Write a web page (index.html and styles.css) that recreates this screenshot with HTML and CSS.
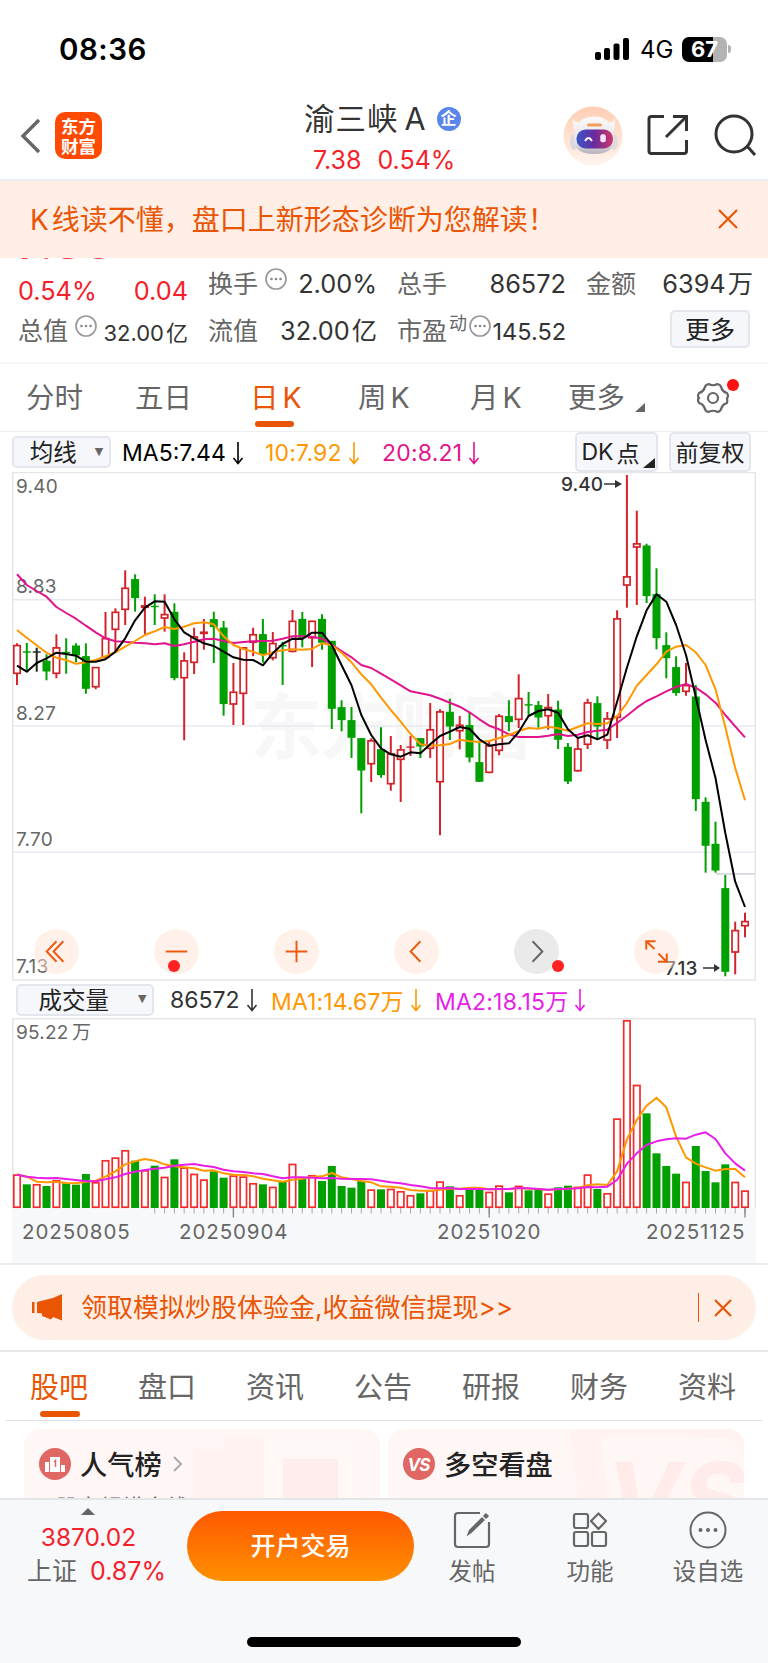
FILE: index.html
```html
<!DOCTYPE html>
<html lang="zh-CN">
<head>
    <meta charset="utf-8">
    <title>渝三峡A</title>
    <link rel="stylesheet" href="styles.css">
</head>
<body>
    <div class="status">
        <span class="time">08:36</span>
        <svg class="signal" width="34" height="23" viewBox="0 0 34 23">
            <rect x="0" y="14" width="6" height="8" rx="2"/><rect x="9" y="10" width="6" height="12" rx="2"/>
            <rect x="18.500" y="5.500" width="6" height="16.500" rx="2"/><rect x="28" y="0" width="6" height="22" rx="2"/>
        </svg>
        <span class="net">4G</span>
        <div class="battery"><b>67</b></div>
        <i class="nub"></i>
    </div>

    <div class="header">
        <svg class="back" width="22" height="36" viewBox="0 0 22 36"><path d="M20 2 L4 18 L20 34" fill="none" stroke="#666" stroke-width="3.400"/></svg>
        <div class="logo">东方<br>财富</div>
        <div class="title">
            <div class="name">渝三峡<span>A</span><em>企</em></div>
            <div class="price"><span>7.38</span><span>0.54%</span></div>
        </div>
        <svg class="robot" width="60" height="60" viewBox="0 0 60 60">
            <defs>
                <linearGradient id="rbg" x1="0" y1="0" x2="0" y2="1"><stop offset="0" stop-color="#ffcdb2"/><stop offset="1" stop-color="#fff5ef"/></linearGradient>
                <linearGradient id="face" x1="0" y1="0" x2="1" y2="0"><stop offset="0" stop-color="#3a55c8"/><stop offset=".5" stop-color="#6a2a9c"/><stop offset="1" stop-color="#d0386a"/></linearGradient>
                <linearGradient id="head" x1="0" y1="0" x2="0" y2="1"><stop offset="0" stop-color="#fbfafa"/><stop offset=".7" stop-color="#e4e1e6"/><stop offset="1" stop-color="#b5b0ba"/></linearGradient>
            </defs>
            <circle cx="30" cy="30" r="29.500" fill="url(#rbg)"/>
            <path d="M10 12 Q9 24 14 27 L22 16 Q12 18 10 12 M52 12 Q53 24 48 27 L40 16 Q50 18 52 12" fill="#f7f4f4"/>
            <ellipse cx="11" cy="36" rx="4" ry="8" fill="#dcd8de"/><ellipse cx="51" cy="36" rx="4" ry="8" fill="#e2dade"/>
            <path d="M11 30 Q13 10.500 31 10.500 Q49 10.500 51 30 Q53 48 31 48 Q9 48 11 30" fill="url(#head)"/>
            <rect x="24" y="17.500" width="15" height="3" rx="1.500" fill="#f0a05a"/>
            <rect x="13.500" y="23.500" width="36.500" height="19" rx="9" fill="url(#face)"/>
            <path d="M22 35 q3.500 -6 7 0" fill="none" stroke="#fff" stroke-width="1.800"/><rect x="37.300" y="28.300" width="5.500" height="8" rx="2" fill="#f8e4f8"/>
        </svg>
        <svg class="share" width="42" height="42" viewBox="0 0 42 42" fill="none" stroke="#333" stroke-width="3">
            <path d="M17 2.500 H4.500 Q2 2.500 2 5 V37 Q2 39.500 4.500 39.500 H37 Q39.500 39.500 39.500 37 V26 M26 2.500 H39.500 V17 M39 3 L19 23"/>
        </svg>
        <svg class="search" width="44" height="44" viewBox="0 0 44 44" fill="none" stroke="#333" stroke-width="3"><circle cx="20" cy="20" r="18"/><path d="M33 32 L41 41"/></svg>
    </div>

    <div class="tip">
        <span>K<i></i>线读不懂，盘口上新形态诊断为您解读！</span>
        <svg width="22" height="22" viewBox="0 0 22 22"><path d="M2 2 L20 20 M20 2 L2 20" stroke="#ea5504" stroke-width="2.200"/></svg>
    </div>

    <div class="quote">
        <div class="last"><span>7.38</span></div>
        <div class="cell red drop"><span>0.54%</span><span>0.04</span></div>
        <div class="cell"><label>换手</label><svg class="more-dot"><use href="#dots"/></svg><span class="r">2.00%</span></div>
        <div class="cell"><label>总手</label><span class="r">86572</span></div>
        <div class="cell"><label>金额</label><span class="r">6394<u>万</u></span></div>
        <div class="cell"><label>总值</label><svg class="more-dot"><use href="#dots"/></svg><span class="r sm">32.00<u>亿</u></span></div>
        <div class="cell"><label>流值</label><span class="r">32.00<u>亿</u></span></div>
        <div class="cell"><label>市盈</label><sup>动</sup><svg class="more-dot pe"><use href="#dots"/></svg><span class="r md">145.52</span></div>
        <div class="cell"><button class="btn more">更多</button></div>
    </div>
    <svg class="defs"><symbol id="dots" viewBox="0 0 22 22"><circle cx="11" cy="11" r="10" fill="none" stroke="#999" stroke-width="1.700"/><g fill="#888"><circle cx="6.500" cy="11" r="1.300"/><circle cx="11" cy="11" r="1.300"/><circle cx="15.500" cy="11" r="1.300"/></g></symbol></svg>

    <div class="period">
        <span class="p1">分时</span>
        <span class="p2">五日</span>
        <span class="p3 on">日<i></i>K</span>
        <span class="p4">周<i></i>K</span>
        <span class="p5">月<i></i>K</span>
        <span class="p6">更多<svg width="10" height="10"><path d="M10 0 V9 H0 Z" fill="#666"/></svg></span>
        <span class="p7">
            <svg width="34" height="34" viewBox="0 0 34 34" fill="none" stroke="#666" stroke-width="2.200">
                <path d="M12.500 3 Q17 5.500 21.500 3 Q25 3.800 25.600 7.500 Q27 11 31 12 Q33 15.500 31 17 Q31.500 20 31 22 Q27 23 25.600 26.500 Q25 30.200 21.500 31 Q17 28.500 12.500 31 Q9 30.200 8.400 26.500 Q7 23 3 22 Q1 18.500 3 17 Q1 15.500 3 12 Q7 11 8.400 7.500 Q9 3.800 12.500 3 Z" stroke-linejoin="round"/><circle cx="17" cy="17" r="5"/>
            </svg>
            <b></b>
        </span>
    </div>

    <div class="bar ma">
        <button class="btn drop-btn">均线<i>▼</i></button>
        <span class="m1">MA5:7.44<svg class="dn"><use href="#dn"/></svg></span>
        <span class="m2">10:7.92<svg class="dn"><use href="#dn"/></svg></span>
        <span class="m3">20:8.21<svg class="dn"><use href="#dn"/></svg></span>
        <button class="btn dk">DK<i></i>点<svg width="12" height="10"><path d="M12 0 V10 H0 Z" fill="#222"/></svg></button>
        <button class="btn fq">前复权</button>
    </div>
    <svg class="defs"><symbol id="dn" viewBox="0 0 12 24"><path d="M6 1 V22 M1.500 17 L6 22.500 L10.500 17" fill="none" stroke="currentColor" stroke-width="1.600"/></symbol></svg>

    <div class="kline">
        <svg id="kline" width="744" height="509" viewBox="12 472 744 509"></svg>
        <div class="tools">
            <i><svg viewBox="0 0 46 46"><path d="M23 12.500 L13 23 L23 33.500 M30 12.500 L20 23 L30 33.500"/></svg></i>
            <i><svg viewBox="0 0 46 46"><path d="M12 23 H34"/></svg><b class="d1"></b></i>
            <i><svg viewBox="0 0 46 46"><path d="M12 23 H34 M23 12 V34"/></svg></i>
            <i><svg viewBox="0 0 46 46"><path d="M27 12.500 L17 23 L27 33.500"/></svg></i>
            <i class="grey"><svg viewBox="0 0 46 46"><path d="M19 12.500 L29 23 L19 33.500"/></svg><b class="d2"></b></i>
            <i><svg viewBox="0 0 46 46"><path d="M12.500 21 V12.500 H22 M12.500 12.500 L21 20.500 M25 25 L33.500 33.500 M24.500 33.500 H33.500 V25"/></svg></i>
        </div>
    </div>

    <div class="bar vol">
        <button class="btn drop-btn">成交量<i>▼</i></button>
        <span class="v1">86572<svg class="dn"><use href="#dn"/></svg></span>
        <span class="v2">MA1:14.67万<svg class="dn"><use href="#dn"/></svg></span>
        <span class="v3">MA2:18.15万<svg class="dn"><use href="#dn"/></svg></span>
    </div>
    <svg id="volume" class="volume" width="744" height="245" viewBox="12 1018 744 245"></svg>

    <div class="promo">
        <div class="pill">
            <svg width="32" height="27" viewBox="0 0 32 27" fill="#ea5504"><path d="M1 8 H3.500 V19 H1 Z M6 8 L22 4 L31 0 V26.500 L22 23 L20 25.500 L11 22 V19.500 L6 19 Z"/></svg>
            <span>领取模拟炒股体验金,收益微信提现&gt;&gt;</span>
            <i></i>
            <svg class="x" width="20" height="20" viewBox="0 0 20 20"><path d="M2 2 L18 18 M18 2 L2 18" stroke="#ea5504" stroke-width="2.200"/></svg>
        </div>
    </div>

    <div class="tabs">
        <span class="on">股吧</span><span>盘口</span><span>资讯</span><span>公告</span><span>研报</span><span>财务</span><span>资料</span>
    </div>

    <div class="cards">
        <div class="card">
            <svg class="deco" width="356" height="70" viewBox="0 0 356 70"><path d="M170 20 H200 V8 H240 V70 H170 Z" fill="#fff2f1"/><path d="M240 12 H333 V70 H240 Z" fill="#fff8f7"/><path d="M259 30 H314 V70 H259 Z" fill="#ffecec"/></svg>
            <div class="head">
                <svg width="32" height="32" viewBox="0 0 32 32"><circle cx="16" cy="16" r="16" fill="#e06763"/><path d="M6 14 H10 V24 H6 Z M11 9 H21 V24 H11 Z M22 17 H26 V24 H22 Z" fill="#fff"/><path d="M15 14 L16.500 12.500 V19" stroke="#e06763" stroke-width="1.500" fill="none"/></svg>
                <h3>人气榜</h3>
                <svg width="10" height="16" viewBox="0 0 10 16"><path d="M1 1 L8 8 L1 15" fill="none" stroke="#aaa" stroke-width="2"/></svg>
            </div>
            <p>股市规模全线 <span>1</span></p>
        </div>
        <div class="card">
            <svg class="deco" width="356" height="70" viewBox="0 0 356 70"><path d="M182 0 H356 V70 H190 Z" fill="#fff2f0"/><path d="M212 8 L270 6 L345 10 L356 30 V70 H220 Z" fill="#fff7f5"/><text x="218" y="106" class="vs-big">VS</text></svg>
            <div class="head">
                <svg width="32" height="32" viewBox="0 0 32 32"><circle cx="16" cy="16" r="16" fill="#e06763"/><text x="15.500" y="22.500" class="vs">VS</text></svg>
                <h3>多空看盘</h3>
            </div>
        </div>
    </div>

    <div class="footer">
        <div class="index">
            <i></i>
            <div class="red">3870.02</div>
            <div class="pct"><label>上证</label><span class="red">0.87%</span></div>
        </div>
        <button class="open">开户交易</button>
        <div class="act a1">
            <svg width="38" height="38" viewBox="0 0 38 38" fill="none" stroke="#666" stroke-width="2.200"><path d="M27 2 H5 Q2 2 2 5 V33 Q2 36 5 36 H33 Q36 36 36 33 V11"/><path d="M13.500 25.500 L16 19 L29 6 L32 9 L18.500 22 Z" fill="#666" stroke="none"/><path d="M31.500 6.500 L34.500 3.500" stroke-width="4.500"/></svg>
            发帖
        </div>
        <div class="act a2">
            <svg width="36" height="38" viewBox="0 0 36 38" fill="none" stroke="#666" stroke-width="2.200"><rect x="2" y="3" width="14" height="14" rx="2"/><rect x="2" y="21" width="14" height="14" rx="2"/><rect x="20" y="21" width="14" height="14" rx="2"/><path d="M26.500 2.500 L34 10 L26.500 18 L19 10 Z" stroke-linejoin="round"/></svg>
            功能
        </div>
        <div class="act a3">
            <svg width="38" height="38" viewBox="0 0 38 38"><circle cx="19" cy="19" r="17.500" fill="none" stroke="#666" stroke-width="2"/><g fill="#666"><circle cx="11.500" cy="19" r="2"/><circle cx="19" cy="19" r="2"/><circle cx="26.500" cy="19" r="2"/></g></svg>
            设自选
        </div>
        <div class="home"></div>
    </div>
    <script src="chart.js"></script>
</body>
</html>
```
FILE: styles.css
```css
* { box-sizing: border-box; }

body {
    margin: 0;
    width: 768px;
    height: 1663px;
    overflow: hidden;
    background: #fff;
    color: #333;
    font-family: Inter, "Noto Sans CJK SC", sans-serif;
    display: flex;
    flex-direction: column;
}

body > * { flex: none; }

i, em, u { font-style: normal; text-decoration: none; }

button { font-family: inherit; padding: 0; }

.red { color: #f4212b; }

.defs { display: none; }

/* status bar */
.status {
    height: 100px;
    padding: 0 37px 2px 59px;
    display: flex;
    align-items: center;
    color: #000;
}

.time {
    font-size: 29.500px;
    font-weight: 600;
    margin-right: auto;
    letter-spacing: 0.500px;
}

.net {
    font-size: 24px;
    margin: 0 10px 0 11px;
    width: 32px;
}

.battery {
    width: 45px;
    height: 25px;
    border-radius: 7px;
    background: linear-gradient(90deg, #000 68%, #b3b3b3 68%);
    color: #fff;
    text-align: center;
    line-height: 25px;
    font-size: 22px;
}

.nub {
    width: 3px;
    height: 8px;
    margin-left: 1px;
    border-radius: 0 4px 4px 0;
    background: #b3b3b3;
}

/* header */
.header {
    height: 81px;
    border-bottom: 2px solid #eceef0;
    display: flex;
    align-items: flex-start;
}

.back { margin: 18px 0 0 19px; }

.logo {
    width: 47px;
    height: 47px;
    margin: 12px 0 0 14px;
    padding-top: 5px;
    border-radius: 10px;
    background: #ff4a04;
    color: #fff;
    font-weight: bold;
    font-size: 17.500px;
    line-height: 19.500px;
    text-align: center;
}

.title {
    margin-left: 202px;
    width: 172px;
    white-space: nowrap;
}

.name {
    font-size: 30.500px;
    line-height: 38px;
    letter-spacing: 1px;
    display: flex;
    align-items: center;
}

.name span { margin-left: 6px; }

.name em {
    margin-left: 10px;
    width: 24px;
    height: 24px;
    border-radius: 50%;
    background: #5a86ea;
    color: #fff;
    font-size: 16px;
    font-weight: bold;
    line-height: 23px;
    letter-spacing: 0;
    text-align: center;
}

.price {
    font-size: 25px;
    line-height: 24px;
    margin: 10px 0 0 9px;
    color: #f4212b;
    display: flex;
    gap: 16px;
}

.robot { margin: 6px 0 0 87px; }
.share { margin: 14px 0 0 24px; }
.search { margin: 14px 0 0 25px; }

/* tip */
.tip {
    height: 77px;
    padding: 0 29px 4px 30px;
    background: #feeee6;
    color: #ea5504;
    display: flex;
    align-items: center;
    justify-content: space-between;
    font-size: 28px;
}

.tip i { margin-left: 3px; }
.tip svg { margin-top: 2px; }

/* quote */
.quote {
    height: 106px;
    padding: 1px 15px 0 18px;
    border-bottom: 2px solid #f4f5f6;
    position: relative;
    display: grid;
    grid-template-columns: 170px 169px 169px 167px;
    grid-template-rows: 49px 45px;
    column-gap: 20px;
    font-size: 25.300px;
}

.last {
    position: absolute;
    left: 17px;
    top: 0;
    height: 2px;
    overflow: hidden;
}

.last span {
    display: block;
    margin-top: -45px;
    color: #ff3a42;
    font-size: 49px;
    font-weight: 500;
    line-height: 58px;
}

.cell {
    display: flex;
    align-items: center;
    white-space: nowrap;
    line-height: 46px;
}

.cell.drop { justify-content: space-between; padding-top: 15px; }

.cell label { color: #666; font-size: 25px; }

.cell .r { margin-left: auto; }
.cell .sm { font-size: 22px; padding-top: 4px; }
.cell .md { font-size: 23.500px; padding-top: 3px; }

.cell u { margin-left: 2px; }

.cell sup {
    font-size: 18px;
    line-height: 18px;
    color: #666;
    margin: -14px 0 0 2px;
}

.more-dot {
    width: 22px;
    height: 22px;
    margin: -10px 0 0 7px;
}

.more-dot.pe { margin-left: 2px; }

.btn {
    border: 2px solid #e3e6ec;
    border-radius: 5px;
    background: #f6f7fa;
    color: #222;
    display: flex;
    align-items: center;
    justify-content: center;
    white-space: nowrap;
}

.more {
    width: 80px;
    height: 38px;
    margin: -4px 3px 0 auto;
    padding-bottom: 2px;
    font-size: 25px;
}

/* period tabs */
.period {
    height: 68px;
    border-bottom: 1px solid #eceef0;
    display: flex;
    align-items: center;
    position: relative;
    font-size: 28.500px;
    color: #666;
}

.period span { position: relative; white-space: nowrap; line-height: 42px; }
.period i { margin-left: 4px; }
.p1 { margin-left: 26px; width: 109px; }
.p2 { width: 115px; }
.p3 { width: 108px; }
.p4 { width: 112px; }
.p5 { width: 98px; }
.p6 { width: 128px; }
.p6 svg { margin: 0 0 -5px 10px; }
.p7 svg { display: block; }

.p7 b {
    position: absolute;
    right: -9px;
    top: -2px;
    width: 12px;
    height: 12px;
    border-radius: 50%;
    background: #f11;
}

.period .on, .tabs .on { color: #ea5504; }

.period .on::after,
.tabs .on::after {
    content: "";
    position: absolute;
    left: 5px;
    bottom: -8px;
    width: 39px;
    height: 6px;
    border-radius: 3px;
    background: #ea5504;
}

/* indicator bars */
.bar {
    height: 40px;
    display: flex;
    align-items: center;
    padding-left: 12px;
    font-size: 23px;
    white-space: nowrap;
}

.bar span { display: flex; align-items: center; padding-top: 1px; }

.dn { width: 12px; height: 24px; margin-left: 6px; }

.drop-btn { height: 32px; padding-bottom: 2px; font-size: 23.500px; }
.drop-btn i { font: 11px "DejaVu Sans"; color: #666; }

.ma .drop-btn { width: 99px; padding-left: 10px; }
.ma .drop-btn i { margin-left: 18px; }
.m1 { margin-left: 11px; width: 143px; color: #000; }
.m2 { width: 117px; color: #ff9800; letter-spacing: 0.200px; }
.m3 { width: 193px; color: #e1148c; letter-spacing: 0.200px; }

.dk, .fq { height: 40px; font-size: 23px; }
.dk { width: 83px; padding-left: 3px; }
.dk i { margin-left: 3px; }
.dk svg { align-self: flex-end; margin: 0 0 2px 3px; }
.fq { width: 82px; margin-left: 11px; padding-bottom: 2px; }

.vol { height: 37px; padding-left: 16px; }
.vol .drop-btn { width: 138px; padding-left: 15px; }
.vol .drop-btn i { margin-left: 29px; }
.v1 { width: 101px; margin-left: 16px; }
.v2 { width: 164px; color: #ff9800; letter-spacing: 0.100px; }
.v3 { color: #e81ee8; letter-spacing: 0.200px; }

/* charts */
.kline {
    height: 509px;
    padding-left: 12px;
    position: relative;
}

.kline > svg, .volume { display: block; }

.volume { margin-left: 12px; }

.tools {
    position: absolute;
    left: 34px;
    top: 457px;
    display: flex;
    gap: 75px;
}

.tools > i {
    position: relative;
    width: 45px;
    height: 45px;
    border-radius: 50%;
    background: rgba(255, 227, 212, 0.500);
}

.tools > .grey { background: rgba(220, 220, 220, 0.600); }

.tools svg { display: block; fill: none; stroke: #ee5a10; stroke-width: 2; }
.tools .grey svg { stroke: #666; }

.tools b {
    position: absolute;
    width: 12px;
    height: 12px;
    border-radius: 50%;
    background: #f22;
    top: 31px;
}

.tools .d1 { left: 14px; }
.tools .d2 { left: 38px; }

.axis { font-size: 19px; fill: #666; letter-spacing: 0.200px; }
.mark { font-size: 19px; fill: #333; font-weight: 500; }
.date { font-size: 20.500px; fill: #666; letter-spacing: 0.900px; }
.water { font-size: 72px; font-weight: bold; fill: #f7f7f7; }

/* promo */
.promo {
    height: 89px;
    padding: 10px 12px 0;
    border-top: 2px solid #e9ebee;
    border-bottom: 2px solid #e6e7ea;
}

.pill {
    height: 65px;
    border-radius: 33px;
    background: #feeee6;
    color: #ea5504;
    display: flex;
    align-items: center;
    padding: 0 23px 0 19px;
    font-size: 26px;
    white-space: nowrap;
}

.pill span { margin: -4px auto 0 18px; }
.pill i { width: 1.500px; height: 29px; background: #ea5504; margin-right: 14px; }

/* tabs */
.tabs {
    height: 69px;
    margin: 0 6px;
    border-bottom: 1px solid #dfe1e6;
    display: flex;
    font-size: 29px;
    color: #666;
}

.tabs span {
    position: relative;
    left: -1px;
    width: 108px;
    text-align: center;
    line-height: 71px;
}

.tabs .on::after { left: 35px; bottom: 3px; width: 40px; }

/* cards */
.cards {
    height: 77px;
    overflow: hidden;
    display: flex;
    gap: 8px;
    padding: 8px 24px 0;
}

.card {
    position: relative;
    width: 356px;
    height: 100px;
    border-radius: 16px 16px 0 0;
    background: #fff7f5;
    overflow: hidden;
}

.deco { position: absolute; left: 0; top: 0; }

.head {
    position: relative;
    height: 70px;
    padding-left: 15px;
    display: flex;
    align-items: center;
}

.head h3 {
    margin: -2px 11px 0 9px;
    font-size: 27.200px;
    font-weight: 500;
    color: #222;
}

.card p {
    position: relative;
    margin: -5px 0 0 32px;
    font-size: 22px;
    line-height: 26px;
    color: #666;
}

.card p span { margin-left: 66px; }

.vs { font-size: 17px; font-weight: bold; font-style: italic; letter-spacing: -1px; text-anchor: middle; fill: #fff; }
.vs-big { font-size: 100px; font-weight: bold; font-style: italic; fill: #ffebe9; }

/* footer */
.footer {
    position: relative;
    height: 166px;
    border-top: 2px solid #e4e5e8;
    background: #f7f8fa;
    display: flex;
    align-items: flex-start;
    white-space: nowrap;
}

.index {
    width: 147px;
    margin-left: 15px;
    text-align: center;
    font-size: 24.500px;
    line-height: 34px;
}

.index i {
    display: block;
    width: 0;
    margin: 8px auto 5px 66px;
    border: 7px solid transparent;
    border-top: 0;
    border-bottom-color: #666;
}

.pct { padding-left: 12px; font-size: 25px; }
.index label { color: #666; margin-right: 13px; }

.open {
    width: 227px;
    height: 70px;
    margin: 11px 0 0 25px;
    padding-bottom: 4px;
    border: 0;
    border-radius: 35px;
    background: linear-gradient(#ff5800, #ff9000);
    color: #fff;
    font-size: 25px;
    font-weight: 500;
}

.act {
    width: 118px;
    margin-top: 11px;
    display: flex;
    flex-direction: column;
    align-items: center;
    font-size: 23.500px;
    line-height: 32px;
    color: #666;
}

.a1 { margin-left: -1px; }

.act svg { margin-bottom: 7px; }

.home {
    position: absolute;
    left: 247px;
    bottom: 17px;
    width: 274px;
    height: 10px;
    border-radius: 5px;
    background: #000;
}
```
FILE: chart.js
```js
var X0 = 17, STEP = 728 / 74;
var RED = '#d2232a', GREEN = '#00a000';

function x(i) { return +(X0 + i * STEP).toFixed(1); }

// type, high, body top, body bottom, low
var candles = [
    ['r',643.3,645,674.3,685],['g',643,651.5,652.7,670],['k',647.7,651.5,652.7,671.7],['g',654.3,661,671.7,680.3],['r',634.3,647.3,674.3,678.3],
    ['g',638.3,652,653.2,673.7],['g',643.3,645.7,655.7,662.3],['g',643.3,656.3,689,693.7],['r',667,667,687.7,689.3],['r',612,638,658.3,658.3],
    ['r',608.3,611.7,630.3,651.7],['r',570.3,587.7,610.3,625],['g',574.3,579.3,598.3,611.7],['r',596.7,605.3,608.3,634.3],['g',594.3,606,607.2,625],
    ['r',594.3,614,619,631.7],['g',603.3,612,678.3,680.3],['r',652.3,660.3,678.7,740.3],['r',627.7,636.3,663.3,674],['r',619,631.7,634.3,649.7],
    ['g',611.7,619.3,627.3,663],['g',621,627.7,704.3,715.7],['r',663,691.7,705,725],['r',647.3,647.3,694.3,725],['r',627.7,634.2,643.2,656.2],
    ['g',619,634.3,654.7,662.7],['r',632,643,658.7,660.3],['g',641.7,645.2,646.4,685],['r',610,620.7,652.3,652.3],['g',612,619,638.3,647.3],
    ['r',620.7,620.7,638.7,667],['g',614.3,619,643,649.7],['g',641,641,709,729],['g',700.3,707.3,720.3,731.3],['g',707,720.3,738,758],
    ['g',738.3,738.3,770.7,813.3],['r',738.3,740.3,764.7,782],['g',727.3,749.3,775.3,777.7],['r',736,753.3,784.7,790.7],['r',745,749.3,760.3,802],
    ['r',736,746.6,747.4,756],['g',738.3,738.3,746.7,758],['r',703,729.3,749.3,758],['r',709.3,711.3,782.7,835.3],['g',698.7,712,726.7,740],
    ['r',716,724.7,731.7,749.3],['g',712.3,725.3,757.7,762.3],['g',742.3,762.3,782,782],['r',740.3,745.3,773.3,773.3],['r',714,715.7,751.3,755.3],
    ['g',700.3,716.3,722.3,731.3],['r',674.3,698,720.3,728],['g',692,704.4,705.6,716.7],['g',701,705.3,717.7,727.7],['r',694,707,716.7,729.7],
    ['g',700.7,709.7,740,749],['g',743,747,781.7,784],['r',738,748.5,771.7,771.7],['r',698.7,702.3,745.3,749],['g',696.3,703.3,726.7,739.3],
    ['r',712,718.3,741,749],['r',610.3,618.3,718.3,738],['r',475,576.3,586,607.7],['r',510.7,543.3,548,605],['g',543.7,545.7,596.3,603],
    ['g',568.3,594.3,638.3,649.3],['g',632.3,645.3,658.3,678.3],['g',656.3,667.3,693.3,695.7],['r',663,685,692.3,695.7],['g',685,696.7,799.3,811],
    ['g',797.3,802,846,872.7],['g',821.7,844,870.7,872.7],['g',875,888.3,972,976.3],['r',921.7,930,953,974.3],['r',912.7,921,926.7,937.3]
];

var ma5 = [665.7,671.7,663,658.3,652.7,654,655.7,661.7,661.7,659.3,651.7,638.3,620.3,607.7,601.3,601.7,619.3,632.3,638.3,643.3,646,651.7,657.3,659.7,660,665.3,653.3,644,638.7,639,632.7,632.7,645,665.3,685.3,715,735,748.3,754.3,756.7,752.3,753.3,744.3,736,731.7,727,728.7,739.3,745.7,744.3,743.3,732,716,711,709.3,712.7,729.3,738,735.3,739.3,734.7,701.7,667.7,636.3,610.3,594.3,601.7,625,655,697,740,778,833,881.7,907];
var ma10 = [630,637.7,645.3,652.7,657.7,660,663.7,662.3,660,656.3,652.3,646.7,641,635,631.3,627,629,626.7,623.3,622.3,624.3,636.3,645,649,651.7,655.3,652.3,650.3,649.3,649.7,649,643.3,645,652.7,662.3,674.3,684.3,697.7,710,721.7,734,744.3,745.7,745.3,744,739.7,741.3,742,741,738,735,731,728,728.7,726.7,728.3,730.7,727,723.3,724,723.3,716.3,703,685.7,675,664.3,651.7,646.7,645,652.3,665,689.3,727,768,800.3];
var ma20 = [574.3,585,591,596.7,607,613,618.7,625.7,632.3,638.3,641.3,641.7,642.7,643.3,644.3,643.3,646,644.3,641.7,639.3,638.7,641,643,642,641.2,641,640.7,638.7,636.3,636.3,636.7,638.7,644.7,651,657.3,665,668,673.7,679.3,685.3,691.3,693.3,695.3,698.7,702.7,706.7,712.3,719.3,725.7,729.3,734.3,737,737,737,735.7,734,736,734.7,732,730.7,729.7,723,715.7,707.7,701,696.3,691.3,687,684,687.7,694.3,702.7,715,726.3,737.3];

// volume values, measured down from the top in thirds of a pixel
var vol = [493,523,522,528,510,520,524,492,516,450,442,420,452,480,467,500,448,472,491,508,484,503,496,499,519,523,530,516,461,507,495,513,468,528,533,513,538,538,536,543,555,550,540,514,529,555,540,539,545,526,547,527,541,540,550,532,527,530,493,537,549,325,30,224,310,430,468,491,515,408,483,517,463,515,541];
var vma5 = [493,500,515,517,515,519,520,515,512,500,484,463,454,447,452,463,469,472,475,482,481,490,494,495,499,506,511,515,509,506,500,499,489,502,507,513,517,529,530,533,540,542,542,539,536,536,533,533,538,538,537,534,536,537,540,538,536,534,526,523,525,484,388,330,287,263,292,380,442,461,472,482,477,477,502];
var vma10 = [494,500,503,505,504,507,510,514,514,508,502,492,485,480,476,473,467,464,462,467,471,479,484,486,490,492,499,505,502,502,503,505,504,506,507,507,508,512,517,520,525,529,534,535,534,537,537,537,538,537,537,534,535,537,539,537,536,535,531,532,530,510,461,430,405,394,388,385,386,374,367,387,430,460,482];

function vy(v) { return 1010 + v / 3; }

function rect(a, b, w, h, color, hollow) {
    if (hollow) {
        return '<rect x="' + (a + 0.8) + '" y="' + (b + 0.8) + '" width="' + (w - 1.6) + '" height="' + Math.max(h - 1.6, 0.5) + '" fill="#fff" stroke="' + color + '" stroke-width="1.7"/>';
    }
    return '<rect x="' + a + '" y="' + b + '" width="' + w + '" height="' + h + '" fill="' + color + '"/>';
}

function line(a, b, c, d, color, w) {
    return '<path d="M' + a + ' ' + b + ' L' + c + ' ' + d + '" stroke="' + color + '" stroke-width="' + (w || 1.5) + '"/>';
}

function curve(list, color, fn) {
    var pts = list.map(function (v, i) { return x(i) + ',' + (fn ? fn(v) : v); }).join(' ');
    return '<polyline points="' + pts + '" fill="none" stroke="' + color + '" stroke-width="2" stroke-linejoin="round"/>';
}

function text(a, b, cls, s, extra) {
    return '<text x="' + a + '" y="' + b + '" class="' + cls + '" ' + (extra || '') + '>' + s + '</text>';
}

// price chart
var k = text(250, 753, 'water', '东方财富', 'textLength="284"');
k += '<rect x="12.75" y="472.5" width="742.5" height="507.5" fill="none" stroke="#e4e6ea" stroke-width="1.5"/>';
k += line(13, 599.8, 755, 599.8, '#e6eaef') + line(13, 726, 755, 726, '#e6eaef') + line(13, 852.2, 755, 852.2, '#e9ebf2');
k += line(716, 874, 755, 874, '#d9dce2', 2);
k += text(16, 493, 'axis', '9.40') + text(16, 592.5, 'axis', '8.83') + text(16, 719.5, 'axis', '8.27') + text(16, 846, 'axis', '7.70') + text(16, 972.5, 'axis', '7.13');
candles.forEach(function (c, i) {
    var col = c[0] == 'r' ? RED : c[0] == 'g' ? GREEN : '#222';
    k += line(x(i), c[1], x(i), c[4], col, 2);
    k += rect(x(i) - 4, c[2] - 0.2, 8, Math.max(c[3] - c[2], 1.4), col, c[0] == 'r' && c[3] - c[2] > 2);
});
k += curve(ma20, '#e1148c') + curve(ma10, '#ff9800') + curve(ma5, '#000');
k += text(561, 491, 'mark', '9.40') + line(604, 484, 618, 484, '#333') + '<path d="M615 480 L622 484 L615 488 Z" fill="#333"/>';
k += text(665, 974.5, 'mark', '7.13') + line(703, 968, 716, 968, '#333') + '<path d="M714 964 L720 968 L714 972 Z" fill="#333"/>';
document.getElementById('kline').innerHTML = k;

// volume chart
var v = '<rect x="12" y="1208" width="744" height="55" fill="#f7f8fa"/>';
v += '<path d="M12.75 1208 V1018.75 H755.25 V1208" fill="none" stroke="#e4e6ea" stroke-width="1.5"/>';
v += text(16, 1038.5, 'axis', '95.22') + text(72, 1038.5, 'axis', '万');
vol.forEach(function (t, i) {
    var up = candles[i][0] != 'g';
    v += rect(x(i) - 4, vy(t), 8, 1208 - vy(t), up ? '#f52b2b' : GREEN, up);
    if (i > 13) v += line(x(i), 1208, x(i), 1213.5, '#aaa', 1);
});
[22, 48, 74].forEach(function (i) { v += line(x(i), 1208, x(i), 1217.5, '#888', 1.4); });
v += curve(vma5, '#ff9800', vy) + curve(vma10, '#e81ee8', vy);
v += text(22, 1239, 'date', '20250805') + text(179, 1239, 'date', '20250904') + text(437, 1239, 'date', '20251020') + text(646, 1239, 'date', '20251125');
document.getElementById('volume').innerHTML = v;
```
